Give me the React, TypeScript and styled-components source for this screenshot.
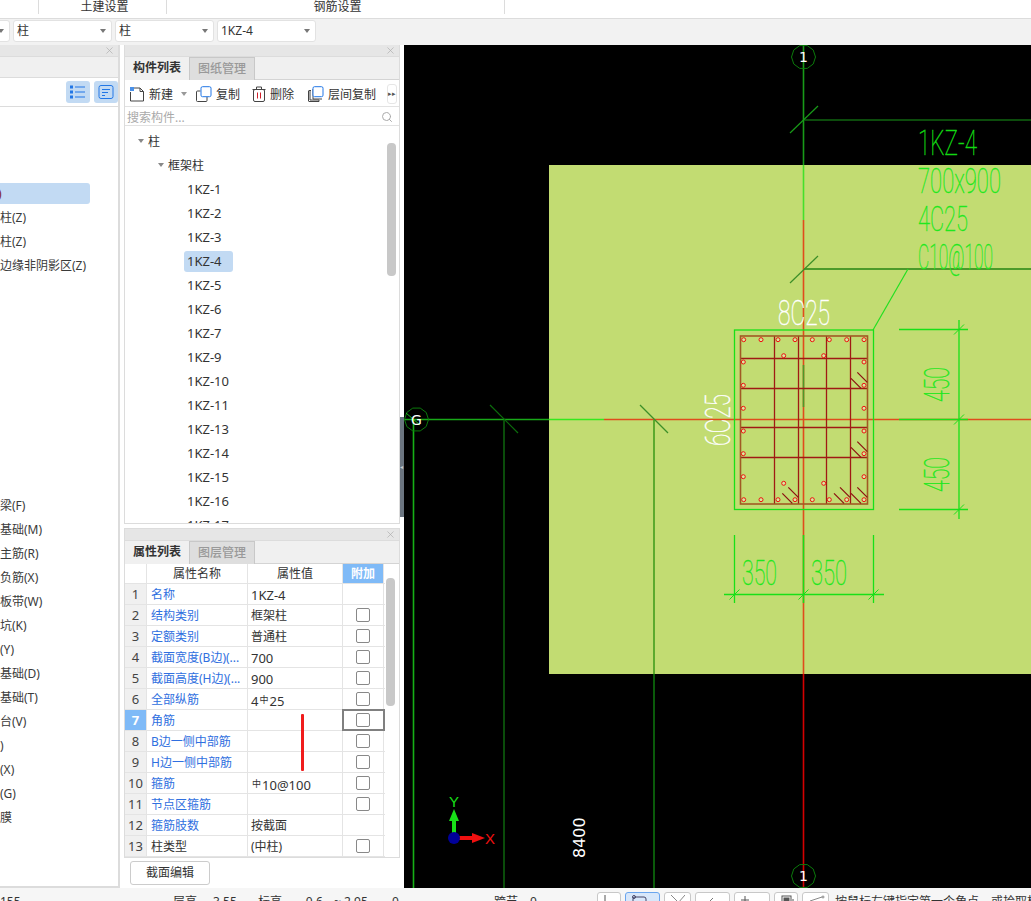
import React from "react";
import styled, { createGlobalStyle } from "styled-components";
import { X, Search } from "lucide-react";

const Global = createGlobalStyle`
  html, body { margin: 0; padding: 0; background: #fff; }
  body { font-family: "Noto Sans", "Noto Sans CJK SC", sans-serif; font-size: 12px; color: #333; overflow: hidden; }
  * { box-sizing: border-box; }
`;

const Page = styled.div`
  width: 1031px;
  height: 901px;
  overflow: hidden;
  position: relative;
  display: flex;
  flex-direction: column;
`;

/* top bars */
const TopNav = styled.div`
  height: 19px;
  flex: none;
  display: flex;
  background: #fff;
  border-bottom: 1px solid #dcdcdc;
`;
const NavCell = styled.div<{ $w: number }>`
  width: ${(p) => p.$w}px;
  height: 14px;
  line-height: 13px;
  padding-left: 4px;
  text-align: center;
  border-right: 1px solid #dcdcdc;
  overflow: hidden;
`;
const SelectBar = styled.div`
  height: 26px;
  flex: none;
  display: flex;
  gap: 3px;
  padding-top: 1px;
  margin-left: -89px;
  background: #f2f2f2;
`;
const SelectBox = styled.div`
  width: 99px;
  height: 22px;
  background: #fff;
  border: 1px solid #e2e2e2;
  border-radius: 3px;
  padding-left: 3px;
  line-height: 20px;
  display: flex;
  justify-content: space-between;
  align-items: center;
`;
const Caret = styled.span`
  width: 0;
  height: 0;
  margin-right: 5px;
  border-left: 3px solid transparent;
  border-right: 3px solid transparent;
  border-top: 4px solid #777;
`;

const Body = styled.div`
  flex: none;
  height: 843px;
  display: flex;
  gap: 4px;
  background: #fff;
`;

/* left column */
const LeftCol = styled.div`
  width: 120px;
  flex: none;
  overflow: hidden;
  border-right: 2px solid #dcdcdc;
  border-bottom: 2px solid #dcdcdc;
  height: 843px;
`;
const PanelHead = styled.div`
  height: 12px;
  background: #e6e6e6;
  border-bottom: 1px solid #dcdcdc;
  display: flex;
  justify-content: flex-end;
  align-items: center;
  padding-right: 3px;
  color: #aaa;
`;
const LeftBlank = styled.div`
  height: 21px;
  background: #f0f0f0;
  border-bottom: 1px solid #dcdcdc;
`;
const LeftTools = styled.div`
  height: 29px;
  display: flex;
  justify-content: flex-end;
  align-items: center;
  gap: 4px;
  padding-right: 0;
  border-bottom: 1px solid #dcdcdc;
`;
const ToggleBtn = styled.div`
  width: 24px;
  height: 22px;
  border-radius: 3px;
  background: #c2daf3;
  display: flex;
  align-items: center;
  justify-content: center;
`;
const LeftTree = styled.div`
  padding-top: 74px;
`;
const LeftGroup = styled.div<{ $gap?: number }>`
  margin-top: ${(p) => p.$gap ?? 0}px;
`;
const LeftRow = styled.div`
  height: 24px;
  display: flex;
  align-items: center;
`;
const LeftLabel = styled.span<{ $on?: boolean }>`
  display: block;
  height: 21px;
  line-height: 21px;
  width: ${(p) => (p.$on ? "90px" : "auto")};
  border-radius: ${(p) => (p.$on ? "0 3px 3px 0" : "0")};
  background: ${(p) => (p.$on ? "#c2daf3" : "transparent")};
  color: ${(p) => (p.$on ? "#7a2030" : "#3a3a3a")};
  white-space: nowrap;
  font-size: 12px;
  text-indent: ${(p) => (p.$on ? "-2px" : "0")};
`;

/* middle column */
const MidCol = styled.div`
  width: 276px;
  flex: none;
  display: flex;
  flex-direction: column;
`;
const CompPanel = styled.div`
  height: 479px;
  flex: none;
  display: flex;
  flex-direction: column;
  border: 1px solid #dcdcdc;
  border-top: 0;
  overflow: hidden;
`;
const AttrPanel = styled.div`
  height: 330px;
  margin-top: 4px;
  flex: none;
  display: flex;
  flex-direction: column;
  border: 1px solid #dcdcdc;
  overflow: hidden;
`;
const TabRow = styled.div`
  height: 23px;
  flex: none;
  display: flex;
  background: #f0f0f0;
  border-bottom: 1px solid #d4d4d4;
`;
const Tab = styled.div<{ $on?: boolean }>`
  width: 65px;
  height: 23px;
  line-height: 22px;
  text-align: center;
  font-weight: ${(p) => (p.$on ? 700 : 500)};
  color: ${(p) => (p.$on ? "#333" : "#999")};
  background: ${(p) => (p.$on ? "#f0f0f0" : "#dedede")};
  border-right: 1px solid #c8c8c8;
  border-top: ${(p) => (p.$on ? "0" : "1px solid #c8c8c8")};
`;
const CompTools = styled.div`
  height: 27px;
  flex: none;
  display: flex;
  align-items: center;
  padding: 1px 0 0 4px;
  border-bottom: 1px solid #e2e2e2;
`;
const ToolItem = styled.div<{ $gap: number }>`
  display: flex;
  align-items: center;
  gap: 4px;
  margin-right: ${(p) => p.$gap}px;
  white-space: nowrap;
`;
const MoreBtn = styled.div`
  width: 10px;
  height: 20px;
  margin-left: auto;
  margin-right: 2px;
  border: 1px solid #e6e6e6;
  border-radius: 3px;
  font-size: 7px;
  line-height: 18px;
  text-align: center;
  color: #555;
`;
const SmallCaret = styled(Caret)`
  margin: 0 0 0 4px;
  border-top-color: #999;
`;
const SearchRow = styled.div`
  height: 19px;
  flex: none;
  display: flex;
  align-items: center;
  justify-content: space-between;
  padding: 1px 6px 0 2px;
  color: #aaa;
  border-bottom: 1px solid #e2e2e2;
`;
const TreeWrap = styled.div`
  flex: 1;
  min-height: 0;
  display: flex;
  overflow: hidden;
`;
const TreeList = styled.div`
  flex: 1;
  padding-top: 3px;
`;
const TreeRow = styled.div<{ $indent: number }>`
  height: 24px;
  display: flex;
  align-items: center;
  padding-left: ${(p) => p.$indent}px;
  gap: 4px;
`;
const TreeCaret = styled(Caret)`
  margin: 0;
  border-top-color: #888;
`;
const LeafLabel = styled.span<{ $on?: boolean }>`
  display: block;
  height: 21px;
  line-height: 21px;
  font-size: 13px;
  margin-left: -3px;
  padding: 0 ${(p) => (p.$on ? "11px" : "0")} 0 3px;
  border-radius: 3px;
  background: ${(p) => (p.$on ? "#c2daf3" : "transparent")};
`;
const ScrollTrack = styled.div<{ $top: number }>`
  width: 13px;
  flex: none;
  padding: ${(p) => p.$top}px 3px 0 1px;
`;
const ScrollThumb = styled.div<{ $h: number }>`
  height: ${(p) => p.$h}px;
  background: #c8c8c8;
  border-radius: 4px;
`;

/* attribute table */
const TableWrap = styled.div`
  flex: 1;
  min-height: 0;
  display: flex;
  overflow: hidden;
`;
const Table = styled.div`
  width: 260px;
  flex: none;
`;
const Row = styled.div<{ $h: number }>`
  height: ${(p) => p.$h}px;
  display: grid;
  grid-template-columns: 22px 101px 95px 41px;
  border-bottom: 1px solid #e4e4e4;
`;
const Cell = styled.div`
  border-right: 1px solid #e4e4e4;
  padding: 1px 0 0 4px;
  line-height: 20px;
  white-space: nowrap;
  overflow: hidden;
  font-size: 12px;
`;
const ValueCell = styled(Cell)`
  padding-left: 3px;
`;
const LatinValue = styled.span`
  font-size: 13px;
`;
const HeadCell = styled(Cell)`
  text-align: center;
  padding: 0;
`;
const AddHead = styled(HeadCell)`
  background: #7fbaf7;
  color: #fff;
  font-weight: 700;
`;
const NumCell = styled.div<{ $on?: boolean }>`
  background: ${(p) => (p.$on ? "#7fbaf7" : "#f0f0f0")};
  color: ${(p) => (p.$on ? "#fff" : "#444")};
  font-weight: ${(p) => (p.$on ? 700 : 400)};
  font-size: 13px;
  text-align: center;
  line-height: 20px;
  border-right: 1px solid #e4e4e4;
`;
const NameCell = styled(Cell)<{ $plain?: boolean }>`
  color: ${(p) => (p.$plain ? "#333" : "#2f6fe0")};
`;
const CheckCell = styled.div<{ $on?: boolean }>`
  display: flex;
  align-items: center;
  justify-content: center;
  border-right: 1px solid #e4e4e4;
  outline: ${(p) => (p.$on ? "2px solid #808080" : "none")};
  outline-offset: -1px;
`;
const Check = styled.div`
  width: 14px;
  height: 14px;
  border: 1px solid #888;
  border-radius: 2px;
  background: #fff;
`;
const RedMark = styled.div`
  position: absolute;
  left: 301px;
  top: 714px;
  width: 3px;
  height: 57px;
  background: #f01c1c;
  border-radius: 1px;
`;
const ButtonRow = styled.div`
  flex: 1;
  padding: 3px 0 0 6px;
`;
const EditBtn = styled.div`
  width: 80px;
  height: 24px;
  line-height: 22px;
  text-align: center;
  border: 1px solid #ccc;
  border-radius: 3px;
  background: #fff;
`;
const Handle = styled.div`
  position: absolute;
  left: 400px;
  top: 417px;
  width: 4px;
  height: 100px;
  background: #6b7580;
  color: #c8ccd0;
  font-size: 6px;
  line-height: 100px;
`;

/* canvas */
const CanvasBox = styled.div`
  flex: 1;
  background: #000;
  height: 843px;
  overflow: hidden;
`;
const CadSvg = styled.svg`
  display: block;
`;
const StickText = styled.text`
  font-family: "Roboto", "Liberation Sans", sans-serif;
  font-weight: 100;
  font-size: 35px;
  stroke-width: 0.45;
`;
const GridText = styled.text`
  font-family: "DejaVu Sans", sans-serif;
  font-size: 14px;
  fill: #fff;
  text-anchor: middle;
`;
const DimLabel = styled.text`
  font-family: "DejaVu Sans", sans-serif;
  font-size: 16px;
  fill: #fff;
`;
const AxisLabel = styled.text`
  font-family: "Liberation Sans", sans-serif;
  font-size: 15px;
`;

/* status */
const StatusBar = styled.div`
  flex: none;
  height: 13px;
  background: #f6f6f6;
  display: flex;
  overflow: hidden;
`;
const StatusText = styled.span<{ $w: number }>`
  width: ${(p) => p.$w}px;
  flex: none;
  padding-top: 6px;
  line-height: 16px;
  white-space: nowrap;
  font-size: 12px;
`;
const StatusGap = styled.span`
  width: 2px;
  flex: none;
`;
const StatusBtn = styled.div<{ $w: number; $on?: boolean }>`
  width: ${(p) => p.$w}px;
  flex: none;
  height: 24px;
  margin: 4px 4px 0 0;
  padding: 2px 0 0 6px;
  border: 1px solid ${(p) => (p.$on ? "#6aa5ee" : "#c8c8c8")};
  border-radius: 3px;
  background: ${(p) => (p.$on ? "#d8e7fa" : "#fff")};
  display: flex;
  align-items: flex-start;
`;

const CloseIcon = () => <X size={11} strokeWidth={1.4} />;

const ListIcon = () => (
  <svg width="16" height="14" viewBox="0 0 16 14" fill="none" stroke="#2277e6" strokeWidth="1">
    <rect x="0.5" y="1" width="2" height="2" />
    <rect x="0.5" y="6" width="2" height="2" />
    <rect x="0.5" y="11" width="2" height="2" />
    <path d="M5 2h10M5 7h10M5 12h10" />
  </svg>
);
const DetailIcon = () => (
  <svg width="16" height="16" viewBox="0 0 16 16" fill="none" stroke="#2277e6" strokeWidth="1">
    <rect x="1" y="1.5" width="14" height="13" rx="2" />
    <path d="M4 5.5h8M4 8.5h6M4 11.5h3" />
  </svg>
);
const NewIcon = () => (
  <svg width="16" height="16" viewBox="0 0 16 16" fill="none">
    <path d="M5 2h6l3.5 3.5v9.5h-13v-9" stroke="#444" strokeWidth="1" />
    <path d="M11 2v3.5h3.5" stroke="#444" strokeWidth="1" />
    <rect x="1" y="1" width="4" height="4" fill="#4a90e8" />
  </svg>
);
const CopyIcon = () => (
  <svg width="16" height="16" viewBox="0 0 16 16" fill="none">
    <path d="M4.5 5H1.5a1 1 0 0 0-1 1v8.5a1 1 0 0 0 1 1H10a1 1 0 0 0 1-1V11" stroke="#444" />
    <rect x="5" y="0.7" width="10" height="10" rx="1.5" stroke="#2277e6" fill="#fff" />
  </svg>
);
const TrashIcon = () => (
  <svg width="14" height="16" viewBox="0 0 14 16" fill="none" stroke="#444">
    <path d="M0.5 3.5h13M4.5 3.5V1h5v2.5" />
    <rect x="1.5" y="3.5" width="11" height="12" rx="1.5" />
    <path d="M5.5 6.5v6M8.5 6.5v6" stroke="#d0202a" />
  </svg>
);
const LayerCopyIcon = () => (
  <svg width="16" height="16" viewBox="0 0 16 16" fill="none">
    <path d="M3 4.5H1a.6.6 0 0 0-.5.5v10a.6.6 0 0 0 .5.5h10v-1.5H2V5M5 3v10h9" stroke="#444" />
    <rect x="5" y="0.7" width="10" height="10" rx="1.5" stroke="#2277e6" fill="#fff" />
  </svg>
);
const SteelMark = styled.span`
  font-size: 9px;
  vertical-align: 3px;
  margin: 0 1px;
`;

const leaves = ["1KZ-1", "1KZ-2", "1KZ-3", "1KZ-4", "1KZ-5", "1KZ-6", "1KZ-7", "1KZ-9", "1KZ-10", "1KZ-11", "1KZ-13", "1KZ-14", "1KZ-15", "1KZ-16", "1KZ-17"];
const leftBottom = ["梁(F)", "基础(M)", "主筋(R)", "负筋(X)", "板带(W)", "坑(K)", "(Y)", "基础(D)", "基础(T)", "台(V)", ")", "(X)", "(G)", "膜"];

type Attr = { name: string; value?: React.ReactNode; plain?: boolean; check: boolean };
const attrs: Attr[] = [
  { name: "名称", value: <LatinValue>1KZ-4</LatinValue>, check: false },
  { name: "结构类别", value: "框架柱", check: true },
  { name: "定额类别", value: "普通柱", check: true },
  { name: "截面宽度(B边)(...", value: <LatinValue>700</LatinValue>, check: true },
  { name: "截面高度(H边)(...", value: <LatinValue>900</LatinValue>, check: true },
  { name: "全部纵筋", value: <LatinValue>4<SteelMark>中</SteelMark>25</LatinValue>, check: true },
  { name: "角筋", check: true, plain: false },
  { name: "B边一侧中部筋", check: true },
  { name: "H边一侧中部筋", check: true },
  { name: "箍筋", value: <LatinValue><SteelMark>中</SteelMark>10@100</LatinValue>, check: true },
  { name: "节点区箍筋", check: true },
  { name: "箍筋肢数", value: "按截面", check: false },
  { name: "柱类型", value: "(中柱)", plain: true, check: true },
];

const barX = [743.7, 761, 778, 795, 812.3, 829.3, 846.7, 864];
const barY = [362, 385.3, 408.3, 431, 453.7, 476.7];
const hatch = [
  [851, 378.3], [857.3, 372.3], [851, 447.3], [857.3, 441.7],
  [851, 493.3], [857.3, 487.3], [834, 493.3], [840, 487.3],
  [782.3, 493.3], [788.3, 487.3],
];

const Tick = ({ x, y, c, r = 5 }: { x: number; y: number; c: string; r?: number }) => (
  <line x1={x - r} y1={y + r} x2={x + r} y2={y - r} stroke={c} />
);

const Octagon = ({ x, y }: { x: number; y: number }) => {
  const pts = Array.from({ length: 10 }, (_, i) => {
    const a = (Math.PI * 2 * i) / 10;
    return `${x + 12 * Math.cos(a)},${y + 12 * Math.sin(a)}`;
  }).join(" ");
  return <polygon points={pts} fill="none" stroke="#0b7a0b" />;
};

const Stick = ({ x, y, w, c, children, rotate }: { x: number; y: number; w: number; c: string; children: string; rotate?: boolean }) => (
  <StickText
    x={x}
    y={y}
    fill={c}
    stroke={c}
    textLength={w}
    lengthAdjust="spacingAndGlyphs"
    transform={rotate ? `rotate(-90 ${x} ${y})` : undefined}
  >
    {children}
  </StickText>
);

const Cad = () => (
  <CadSvg width="627" height="843" viewBox="404 45 627 843">
    <rect x="549" y="165" width="482" height="509" fill="#c2dc72" />

    {/* axis 1 */}
    <g strokeWidth="1.6">
      <line x1="803.5" y1="45" x2="803.5" y2="165" stroke="#189a18" />
      <line x1="803.5" y1="165" x2="803.5" y2="220" stroke="#45e02a" />
      <line x1="803.5" y1="220" x2="803.5" y2="674" stroke="#e04c1c" />
      <line x1="803.5" y1="365" x2="803.5" y2="407" stroke="#4c9a2a" />
      <line x1="803.5" y1="535" x2="803.5" y2="603" stroke="#18e018" />
      <line x1="803.5" y1="674" x2="803.5" y2="888" stroke="#d40000" />

      {/* axis G */}
      <line x1="404" y1="419.5" x2="549" y2="419.5" stroke="#18a818" />
      <line x1="549" y1="419.5" x2="604" y2="419.5" stroke="#36e81e" />
      <line x1="604" y1="419.5" x2="1031" y2="419.5" stroke="#e04c1c" />
      <line x1="899" y1="419.5" x2="968" y2="419.5" stroke="#18e018" />
      <line x1="413.5" y1="420" x2="413.5" y2="888" stroke="#16b016" />
    </g>

    {/* other grid lines */}
    <line x1="504" y1="420" x2="504" y2="888" stroke="#0a4c0a" strokeWidth="2" />
    <line x1="654" y1="420" x2="654" y2="674" stroke="#5caa2e" strokeWidth="2" />
    <line x1="654" y1="674" x2="654" y2="888" stroke="#0a5a0a" strokeWidth="2" />
    <line x1="804" y1="120" x2="1031" y2="120" stroke="#0c4c0c" strokeWidth="2" />
    <line x1="804" y1="269" x2="1031" y2="269" stroke="#4c9a2a" strokeWidth="2" />
    <line x1="790" y1="133" x2="818" y2="106" stroke="#189a18" strokeWidth="1.2" />
    <line x1="790" y1="283" x2="818" y2="256" stroke="#3c8f28" strokeWidth="1.2" />
    <line x1="490" y1="405" x2="518" y2="433" stroke="#0c6c0c" strokeWidth="1.2" />
    <line x1="640" y1="405" x2="668" y2="433" stroke="#3c8f28" strokeWidth="1.2" />
    <line x1="908" y1="269" x2="873" y2="330" stroke="#22e020" strokeWidth="1.2" />

    {/* column */}
    <rect x="734.5" y="330" width="139" height="179.5" fill="none" stroke="#18e018" strokeWidth="1.3" />
    <path d="M774.5 336v168M798.5 336v168M826.5 336v168M850.5 336v168M740 358.5h128M740 388.5h128M740 427.5h128M740 457.5h128" stroke="#a01a14" strokeWidth="1.3" fill="none" />
    <rect x="740.5" y="336" width="127" height="168" fill="none" stroke="#a05a24" strokeWidth="1.6" />
    {hatch.map(([x, y], i) => (
      <line key={i} x1={x} y1={y} x2={x + 10} y2={y + 10} stroke="#8c1010" strokeWidth="1.2" />
    ))}
    {barX.flatMap((x) => [339.7, 499.7].map((y) => <circle key={`${x}-${y}`} cx={x} cy={y} r="2" fill="#d8e8a0" stroke="#f01010" />))}
    {barY.flatMap((y) => [743.3, 864].map((x) => <circle key={`${x}-${y}`} cx={x} cy={y} r="2" fill="#d8e8a0" stroke="#f01010" />))}
    {[[783.7, 355.7], [823.7, 355.7], [783.7, 483.3], [823.7, 483.3]].map(([x, y]) => (
      <circle key={`${x}-${y}`} cx={x} cy={y} r="2" fill="#d8e8a0" stroke="#f01010" />
    ))}

    {/* dimensions */}
    <path d="M899 329.5h69M899 509.5h69M959 320v199M734.5 535v68M873.5 535v68M724 594.5h160" stroke="#18e018" strokeWidth="1.3" fill="none" />
    <Tick x={959} y={329.5} c="#18e018" />
    <Tick x={959} y={419.5} c="#18e018" />
    <Tick x={959} y={509.5} c="#18e018" />
    <Tick x={734.5} y={594.5} c="#18e018" />
    <Tick x={803.5} y={594.5} c="#18e018" />
    <Tick x={873.5} y={594.5} c="#18e018" />

    <Stick x={918} y={155} w={59} c="#12d812">1KZ-4</Stick>
    <Stick x={918} y={193} w={83} c="#1ee81e">700x900</Stick>
    <Stick x={918} y={231} w={50} c="#1ee81e">4C25</Stick>
    <Stick x={918} y={269} w={75} c="#1ee81e">C10@100</Stick>
    <Stick x={778} y={325} w={52} c="#ffffff">8C25</Stick>
    <Stick x={730} y={446} w={52} c="#ffffff" rotate>6C25</Stick>
    <Stick x={949} y={402} w={35} c="#1ee81e" rotate>450</Stick>
    <Stick x={949} y={492} w={35} c="#1ee81e" rotate>450</Stick>
    <Stick x={742} y={585} w={35} c="#1ee81e">350</Stick>
    <Stick x={811} y={585} w={36} c="#1ee81e">350</Stick>

    {/* grid bubbles */}
    <Octagon x={803.5} y={57} />
    <GridText x={803.5} y={62}>1</GridText>
    <Octagon x={803.5} y={876} />
    <GridText x={803.5} y={881}>1</GridText>
    <Octagon x={416.5} y={419.5} />
    <line x1="406" y1="413" x2="420" y2="425" stroke="#18c018" />
    <GridText x={416.5} y={425}>G</GridText>

    {/* 8400 */}
    <DimLabel transform="rotate(-90 585 858)" x={585} y={858}>8400</DimLabel>

    {/* ucs */}
    <rect x="452" y="820" width="4" height="18" fill="#18e018" />
    <polygon points="454,809 449,821 459,821" fill="#18e018" />
    <rect x="454" y="836" width="20" height="4" fill="#f01010" />
    <polygon points="485,838 472,833 472,843" fill="#f01010" />
    <circle cx="454" cy="838" r="6" fill="#000099" />
    <AxisLabel x={449} y={807} fill="#18e018" textLength={10} lengthAdjust="spacingAndGlyphs">Y</AxisLabel>
    <AxisLabel x={485} y={844} fill="#f01010" textLength={10} lengthAdjust="spacingAndGlyphs">X</AxisLabel>
  </CadSvg>
);

export default function App() {
  return (
    <Page>
      <Global />
      <TopNav>
        <NavCell $w={39} />
        <NavCell $w={128}>土建设置</NavCell>
        <NavCell $w={338}>钢筋设置</NavCell>
      </TopNav>
      <SelectBar>
        <SelectBox><span /><Caret /></SelectBox>
        <SelectBox>柱<Caret /></SelectBox>
        <SelectBox>柱<Caret /></SelectBox>
        <SelectBox>1KZ-4<Caret /></SelectBox>
      </SelectBar>
      <Body>
        <LeftCol>
          <PanelHead><CloseIcon /></PanelHead>
          <LeftBlank />
          <LeftTools>
            <ToggleBtn><ListIcon /></ToggleBtn>
            <ToggleBtn><DetailIcon /></ToggleBtn>
          </LeftTools>
          <LeftTree>
            <LeftGroup>
              <LeftRow><LeftLabel $on>)</LeftLabel></LeftRow>
              <LeftRow><LeftLabel>柱(Z)</LeftLabel></LeftRow>
              <LeftRow><LeftLabel>柱(Z)</LeftLabel></LeftRow>
              <LeftRow><LeftLabel>边缘非阴影区(Z)</LeftLabel></LeftRow>
            </LeftGroup>
            <LeftGroup $gap={216}>
              {leftBottom.map((t, i) => (
                <LeftRow key={i}><LeftLabel>{t}</LeftLabel></LeftRow>
              ))}
            </LeftGroup>
          </LeftTree>
        </LeftCol>
        <MidCol>
          <CompPanel>
            <PanelHead><CloseIcon /></PanelHead>
            <TabRow>
              <Tab $on>构件列表</Tab>
              <Tab>图纸管理</Tab>
            </TabRow>
            <CompTools>
              <ToolItem $gap={9}><NewIcon />新建<SmallCaret /></ToolItem>
              <ToolItem $gap={12}><CopyIcon />复制</ToolItem>
              <ToolItem $gap={14}><TrashIcon />删除</ToolItem>
              <ToolItem $gap={0}><LayerCopyIcon />层间复制</ToolItem>
              <MoreBtn>▸▸</MoreBtn>
            </CompTools>
            <SearchRow>搜索构件...<Search size={12} color="#aaa" /></SearchRow>
            <TreeWrap>
              <TreeList>
                <TreeRow $indent={13}><TreeCaret />柱</TreeRow>
                <TreeRow $indent={33}><TreeCaret />框架柱</TreeRow>
                {leaves.map((l) => (
                  <TreeRow key={l} $indent={62}>
                    <LeafLabel $on={l === "1KZ-4"}>{l}</LeafLabel>
                  </TreeRow>
                ))}
              </TreeList>
              <ScrollTrack $top={17}><ScrollThumb $h={133} /></ScrollTrack>
            </TreeWrap>
          </CompPanel>
          <AttrPanel>
            <PanelHead><CloseIcon /></PanelHead>
            <TabRow>
              <Tab $on>属性列表</Tab>
              <Tab>图层管理</Tab>
            </TabRow>
            <TableWrap>
              <Table>
                <Row $h={20}>
                  <HeadCell />
                  <HeadCell>属性名称</HeadCell>
                  <HeadCell>属性值</HeadCell>
                  <AddHead>附加</AddHead>
                </Row>
                {attrs.map((a, i) => (
                  <Row key={a.name} $h={21}>
                    <NumCell $on={i === 6}>{i + 1}</NumCell>
                    <NameCell $plain={i === 12}>{a.name}</NameCell>
                    <ValueCell>{a.value}</ValueCell>
                    <CheckCell $on={i === 6}>{a.check && <Check />}</CheckCell>
                  </Row>
                ))}
              </Table>
              <ScrollTrack $top={14}><ScrollThumb $h={128} /></ScrollTrack>
            </TableWrap>
          </AttrPanel>
          <ButtonRow><EditBtn>截面编辑</EditBtn></ButtonRow>
        </MidCol>
        <CanvasBox><Cad /></CanvasBox>
      </Body>
      <StatusBar>
        <StatusText $w={173}>155</StatusText>
        <StatusText $w={40}>层高</StatusText>
        <StatusText $w={45}>3.55</StatusText>
        <StatusText $w={44}>标高</StatusText>
        <StatusText $w={32}>-0.6</StatusText>
        <StatusText $w={58}>~ 2.95</StatusText>
        <StatusText $w={102}>0</StatusText>
        <StatusText $w={36}>跨节</StatusText>
        <StatusText $w={67}>0</StatusText>
        <StatusBtn $w={24}><svg width="10" height="8"><path d="M1 0v8" stroke="#555" /></svg></StatusBtn>
        <StatusBtn $w={35} $on><svg width="16" height="8" fill="none" stroke="#446"><rect x="1" y="2" width="13" height="8" rx="2" /><circle cx="2" cy="2" r="1.5" /></svg></StatusBtn>
        <StatusBtn $w={27}><svg width="14" height="8" stroke="#888"><path d="M0 0l8 8M14 0L7 8" /></svg></StatusBtn>
        <StatusBtn $w={35}><svg width="20" height="8" stroke="#777"><path d="M6 8l5-5" /></svg></StatusBtn>
        <StatusBtn $w={36}><svg width="10" height="8" stroke="#555"><path d="M4 1v7M0 5h8" /></svg></StatusBtn>
        <StatusBtn $w={24}><svg width="14" height="8" fill="none" stroke="#555"><rect x="1" y="1" width="9" height="8" /><rect x="3" y="3" width="5" height="5" fill="#555" /><path d="M12 4v4" /></svg></StatusBtn>
        <StatusBtn $w={27}><svg width="16" height="8" stroke="#888" fill="none"><path d="M1 6l12-4" /><circle cx="14" cy="2" r="1" /></svg></StatusBtn>
        <StatusGap />
        <StatusText $w={200}>按鼠标左键指定第一个角点，或拾取构件</StatusText>
      </StatusBar>
      <RedMark />
      <Handle>◂</Handle>
    </Page>
  );
}
